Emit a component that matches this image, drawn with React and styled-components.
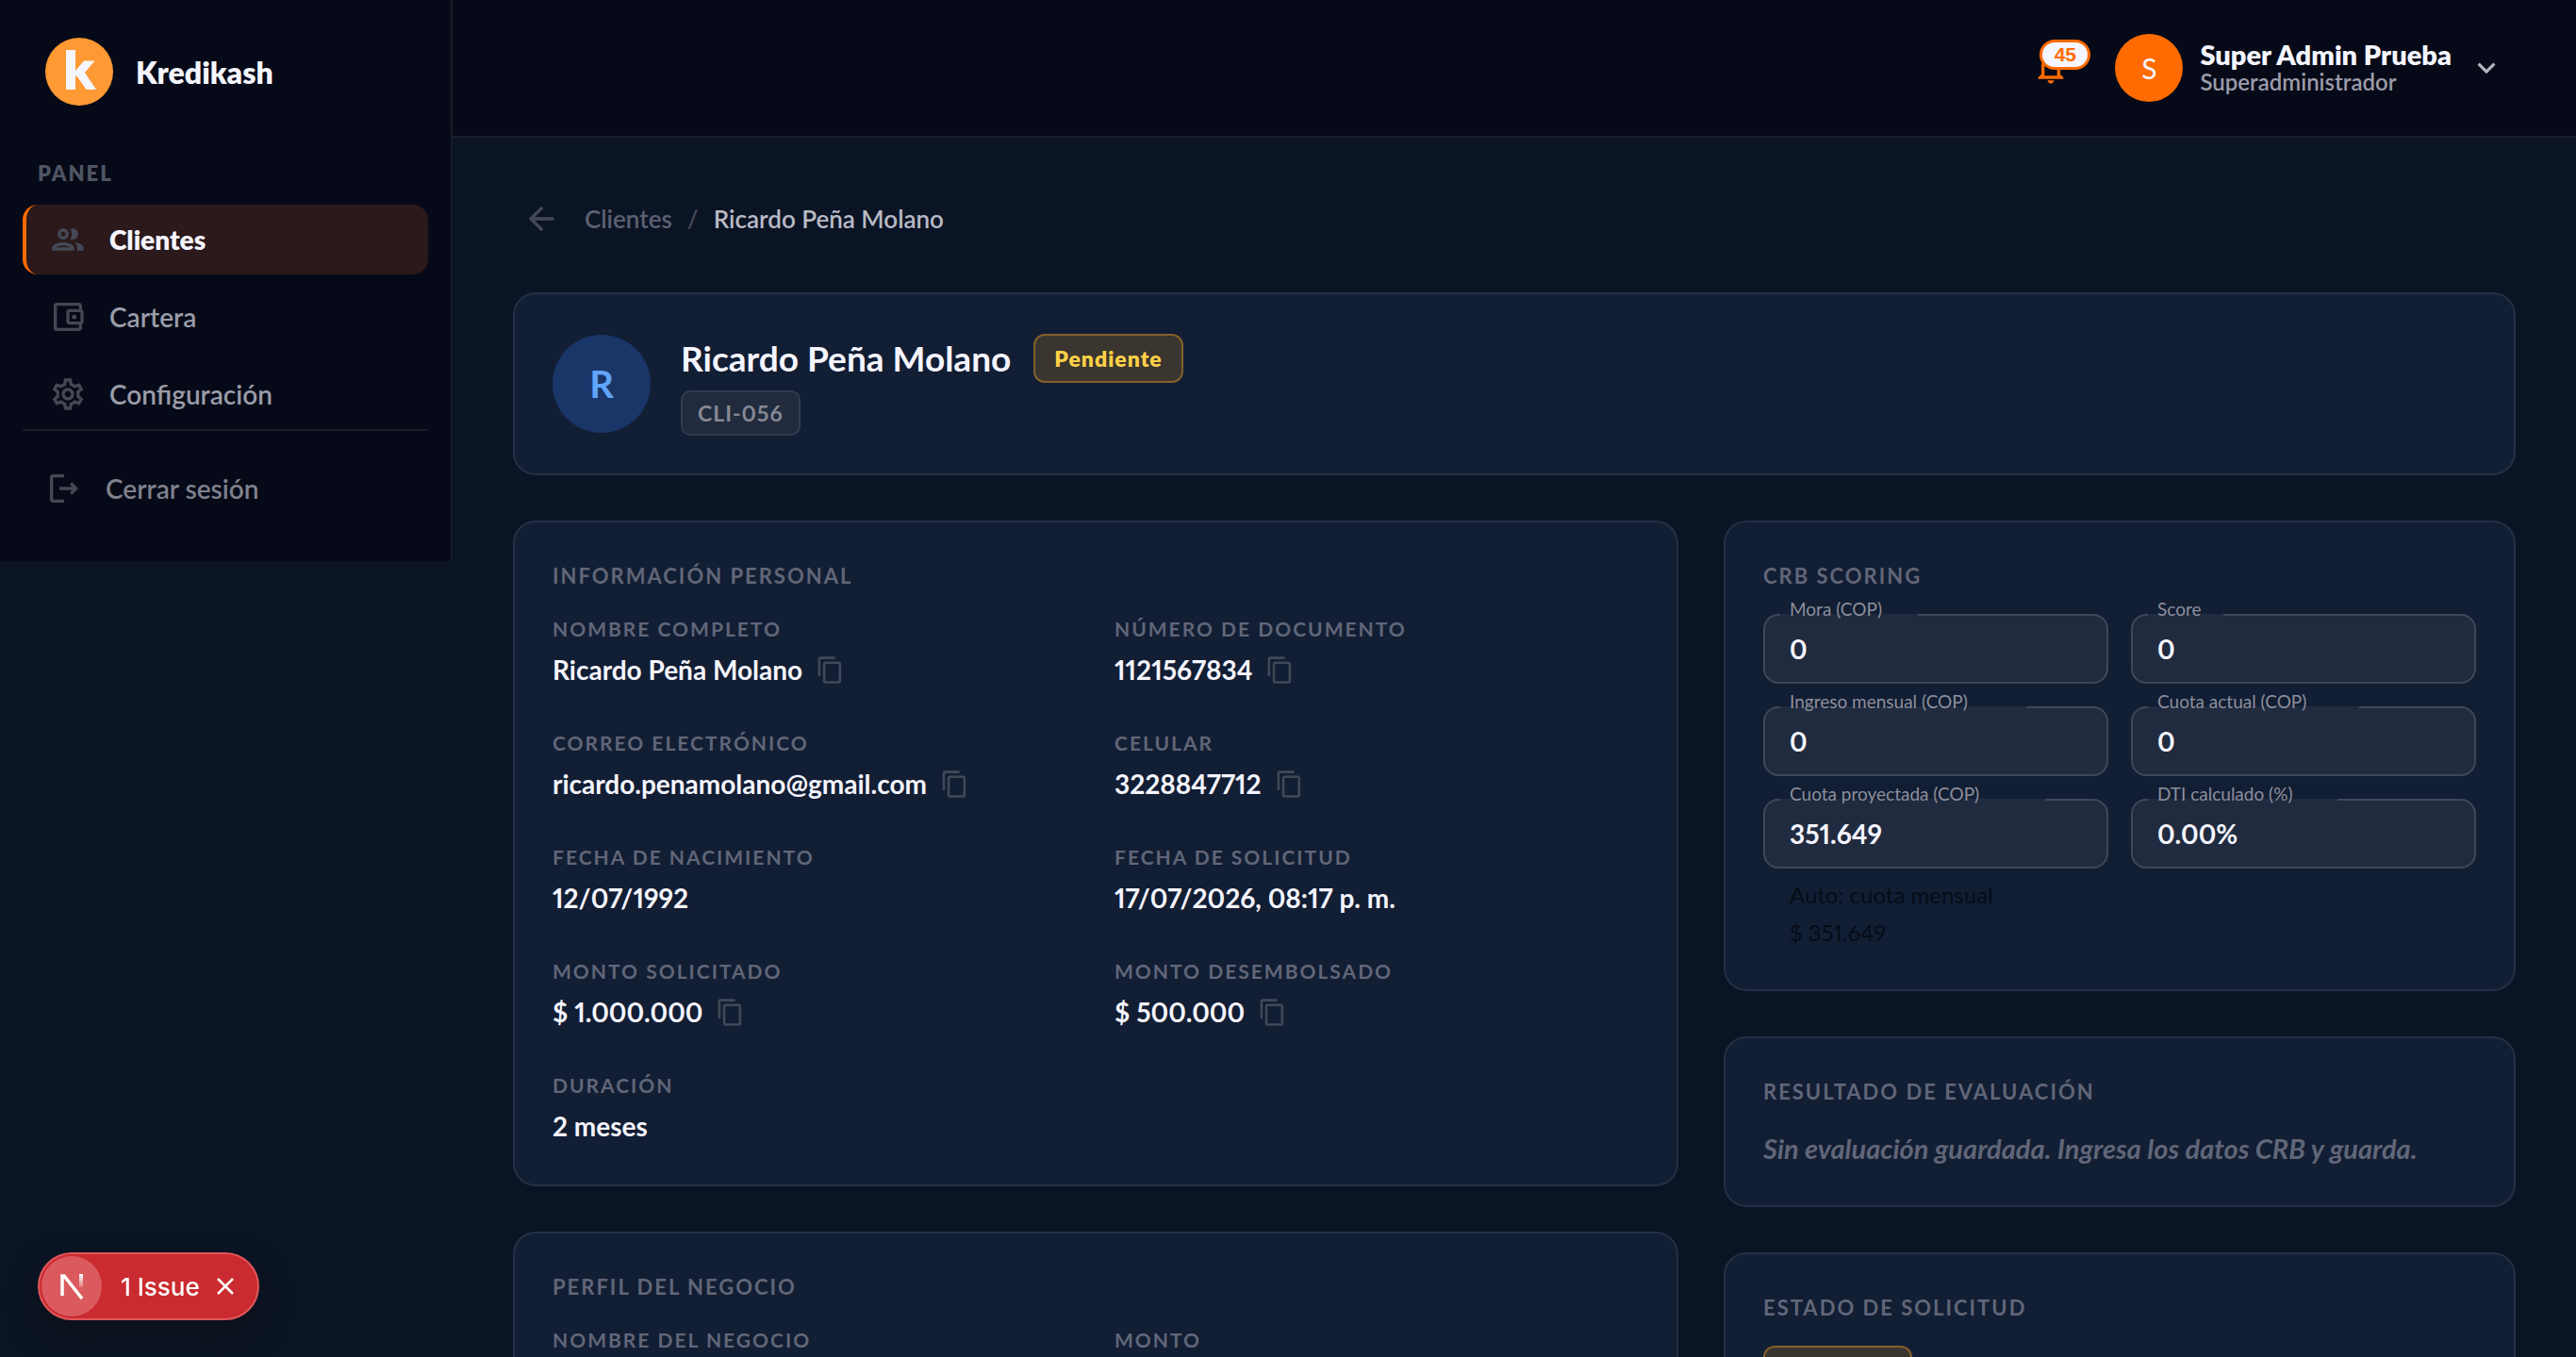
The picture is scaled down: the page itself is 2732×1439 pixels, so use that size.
import React from "react";
import styled, { createGlobalStyle } from "styled-components";
import {
  MdOutlineGroup,
  MdOutlineAccountBalanceWallet,
  MdOutlineSettings,
  MdContentCopy,
  MdArrowBack,
  MdKeyboardArrowDown,
  MdNotificationsNone,
} from "react-icons/md";

const navItems = [
  { id: "clientes", label: "Clientes", Icon: MdOutlineGroup, active: true },
  { id: "cartera", label: "Cartera", Icon: MdOutlineAccountBalanceWallet },
  { id: "configuracion", label: "Configuración", Icon: MdOutlineSettings },
];

const personalInfo = [
  { label: "Nombre completo", value: "Ricardo Peña Molano", copy: true },
  { label: "Número de documento", value: "1121567834", copy: true },
  {
    label: "Correo electrónico",
    value: "ricardo.penamolano@gmail.com",
    copy: true,
  },
  { label: "Celular", value: "3228847712", copy: true },
  { label: "Fecha de nacimiento", value: "12/07/1992" },
  { label: "Fecha de solicitud", value: "17/07/2026, 08:17 p. m." },
  { label: "Monto solicitado", value: "$ 1.000.000", copy: true },
  { label: "Monto desembolsado", value: "$ 500.000", copy: true },
  { label: "Duración", value: "2 meses" },
];

const businessInfo = [{ label: "Nombre del negocio" }, { label: "Monto" }];

// notch is the width of the opening in the outline behind the label
const scoringFields = [
  { id: "mora", label: "Mora (COP)", value: "0", notch: 146 },
  { id: "score", label: "Score", value: "0", notch: 80 },
  { id: "ingreso", label: "Ingreso mensual (COP)", value: "0", notch: 261 },
  { id: "cuota", label: "Cuota actual (COP)", value: "0", notch: 224 },
  {
    id: "proyectada",
    label: "Cuota proyectada (COP)",
    value: "351.649",
    notch: 281,
    help: ["Auto: cuota mensual", "$ 351.649"],
  },
  { id: "dti", label: "DTI calculado (%)", value: "0.00%", notch: 201 },
];

const LogoutIcon = () => (
  <svg viewBox="0 0 24 24" width="40" height="40" fill="currentColor">
    <path d="M17 8l-1.41 1.41L17.17 11H9v2h8.17l-1.58 1.58L17 16l4-4-4-4z" />
    <path d="M5 5h7V3H5c-1.1 0-2 .9-2 2v14c0 1.1.9 2 2 2h7v-2H5V5z" />
  </svg>
);

const BrandMark = () => (
  <svg viewBox="0 0 72 72" width="72" height="72">
    <circle cx="36" cy="36" r="36" fill="#ff9933" />
    <g fill="#f5f5ff">
      <rect x="22" y="13" width="10" height="42" />
      <polygon points="32,35 41,24.5 52.5,24.5 42,37 54,55 43.5,55 34.5,42 32,40" />
    </g>
  </svg>
);

const NextMark = () => (
  <svg viewBox="0 0 25 27" width="25" height="27" fill="none">
    <defs>
      <linearGradient id="nextFade" x1="0" y1="0" x2="0" y2="1">
        <stop offset="0" stopColor="#fff" />
        <stop offset="1" stopColor="#fff" stopOpacity="0.2" />
      </linearGradient>
    </defs>
    <path d="M2 23V2h2l19 24" stroke="#fff" strokeWidth="3.5" />
    <rect x="20" y="0" width="4" height="14" fill="url(#nextFade)" />
  </svg>
);

const Detail = ({ label, value, copy }) => (
  <div>
    <DetailLabel>{label}</DetailLabel>
    {value && (
      <DetailValue>
        {value}
        {copy && (
          <CopyButton type="button" aria-label={`Copiar ${label}`}>
            <MdContentCopy size={31} />
          </CopyButton>
        )}
      </DetailValue>
    )}
  </div>
);

const ScoringField = ({ id, label, value, notch, help }) => (
  <div>
    <FieldBox>
      <FieldLabel htmlFor={id}>{label}</FieldLabel>
      <FieldInput id={id} defaultValue={value} />
      <Outline aria-hidden="true">
        <legend style={{ width: notch }} />
      </Outline>
    </FieldBox>
    {help && (
      <HelpText>
        {help.map((line) => (
          <span key={line}>{line}</span>
        ))}
      </HelpText>
    )}
  </div>
);

const App = () => {
  return (
    <Shell>
      <GlobalStyle />
      <Sidebar>
        <Brand>
          <BrandMark />
          Kredikash
        </Brand>
        <NavTitle>Panel</NavTitle>
        <Nav>
          {navItems.map(({ id, label, Icon, active }) => (
            <NavLink key={id} href={`#${id}`} $active={active}>
              <Icon size={40} />
              {label}
            </NavLink>
          ))}
        </Nav>
        <LogoutArea>
          <LogoutButton type="button">
            <LogoutIcon />
            Cerrar sesión
          </LogoutButton>
        </LogoutArea>
      </Sidebar>

      <Page>
        <Topbar>
          <BellButton type="button" aria-label="Notificaciones">
            <MdNotificationsNone size={40} />
            <BellCount>45</BellCount>
          </BellButton>
          <UserButton type="button">
            <UserAvatar>S</UserAvatar>
            <UserText>
              <UserName>Super Admin Prueba</UserName>
              <UserRole>Superadministrador</UserRole>
            </UserText>
            <MdKeyboardArrowDown size={38} />
          </UserButton>
        </Topbar>

        <Main>
          <Breadcrumb aria-label="Ruta">
            <BackButton type="button" aria-label="Volver">
              <MdArrowBack size={40} />
            </BackButton>
            <a href="#clientes">Clientes</a>
            <Slash>/</Slash>
            <Current>Ricardo Peña Molano</Current>
          </Breadcrumb>

          <ClientCard>
            <ClientAvatar>R</ClientAvatar>
            <div>
              <ClientHeading>
                <ClientName>Ricardo Peña Molano</ClientName>
                <StatusBadge>Pendiente</StatusBadge>
              </ClientHeading>
              <ClientCode>CLI-056</ClientCode>
            </div>
          </ClientCard>

          <Columns>
            <Stack>
              <Card>
                <CardTitle>Información personal</CardTitle>
                <DetailGrid>
                  {personalInfo.map((item) => (
                    <Detail key={item.label} {...item} />
                  ))}
                </DetailGrid>
              </Card>
              <Card>
                <CardTitle>Perfil del negocio</CardTitle>
                <DetailGrid>
                  {businessInfo.map((item) => (
                    <Detail key={item.label} {...item} />
                  ))}
                </DetailGrid>
              </Card>
            </Stack>

            <Stack>
              <Card>
                <CardTitle>CRB Scoring</CardTitle>
                <FieldGrid>
                  {scoringFields.map((field) => (
                    <ScoringField key={field.id} {...field} />
                  ))}
                </FieldGrid>
              </Card>
              <Card>
                <CardTitle>Resultado de evaluación</CardTitle>
                <EmptyText>
                  Sin evaluación guardada. Ingresa los datos CRB y guarda.
                </EmptyText>
              </Card>
              <Card>
                <CardTitle>Estado de solicitud</CardTitle>
                <StatusBadge>Pendiente</StatusBadge>
              </Card>
            </Stack>
          </Columns>
        </Main>
      </Page>

      <IssueToast>
        <NextCircle>
          <NextMark />
        </NextCircle>
        <IssueButton type="button">1 Issue</IssueButton>
        <CloseButton type="button" aria-label="Cerrar">
          <svg viewBox="0 0 18 18" width="18" height="18">
            <path d="M1 1l16 16M17 1L1 17" stroke="#fff" strokeWidth="2.5" />
          </svg>
        </CloseButton>
      </IssueToast>
    </Shell>
  );
};

const GlobalStyle = createGlobalStyle`
  *, *::before, *::after {
    box-sizing: border-box;
  }
  body {
    margin: 0;
    background: #0b1424;
    color: #f5f5ff;
    font-family: Lato, "Liberation Sans", sans-serif;
    font-size: 28px;
    font-variant-numeric: proportional-nums;
  }
  button, input {
    font: inherit;
    color: inherit;
  }
  button {
    padding: 0;
    border: none;
    background: transparent;
    cursor: pointer;
  }
  a {
    color: inherit;
    text-decoration: none;
  }
  h1, h2, p {
    margin: 0;
  }
  svg {
    display: block;
    flex-shrink: 0;
  }
`;

const Shell = styled.div`
  display: flex;
  align-items: flex-start;
  height: 100vh;
  overflow: hidden;
`;

const Sidebar = styled.aside`
  flex: 0 0 480px;
  padding: 40px 24px;
  background: #060a18;
  border-right: 2px solid #191d29;
`;

const Brand = styled.div`
  display: flex;
  align-items: center;
  gap: 24px;
  padding-left: 24px;
  font-size: 32px;
  font-weight: 800;
`;

const NavTitle = styled.h2`
  margin-top: 56px;
  padding: 0 16px;
  color: #4f5563;
  font-size: 22px;
  font-weight: 800;
  line-height: 32px;
  letter-spacing: 2px;
  text-transform: uppercase;
`;

const Nav = styled.nav`
  display: flex;
  flex-direction: column;
  gap: 8px;
  margin-top: 17px;
`;

const NavLink = styled.a`
  display: flex;
  align-items: center;
  gap: 24px;
  height: 74px;
  padding-left: 24px;
  border-left: 4px solid ${(props) => (props.$active ? "#ff6b00" : "transparent")};
  border-radius: 16px;
  background: ${(props) => (props.$active ? "#2b191b" : "transparent")};
  color: ${(props) => (props.$active ? "#f5f5ff" : "#9b9ca9")};
  font-size: 28px;
  font-weight: ${(props) => (props.$active ? 800 : 600)};

  svg {
    color: #444854;
  }
`;

const LogoutArea = styled.div`
  padding-top: 24px;
  border-top: 2px solid #191d29;
`;

const LogoutButton = styled.button`
  display: flex;
  align-items: center;
  gap: 24px;
  height: 74px;
  padding-left: 24px;
  color: #7f818d;
  font-size: 28px;
  font-weight: 600;

  svg {
    color: #444854;
  }
`;

const Page = styled.div`
  flex: 1;
  min-width: 0;
`;

const Topbar = styled.header`
  display: flex;
  align-items: center;
  justify-content: flex-end;
  gap: 48px;
  height: 146px;
  padding-right: 76px;
  background: #060a18;
  border-bottom: 2px solid #191d29;
`;

const BellButton = styled.button`
  position: relative;
  color: #ff6b00;
`;

const BellCount = styled.span`
  position: absolute;
  top: -10px;
  left: 8px;
  width: 54px;
  height: 32px;
  border: 3px solid #ff6b00;
  border-radius: 16px;
  background: #f5f5ff;
  font-family: "Liberation Sans", sans-serif;
  font-size: 21px;
  font-weight: 700;
  line-height: 26px;
  text-align: center;
`;

const UserButton = styled.button`
  display: flex;
  align-items: center;
  gap: 18px;
  color: #b4b5c0;
  text-align: left;
`;

const UserAvatar = styled.span`
  display: grid;
  place-items: center;
  width: 72px;
  height: 72px;
  border-radius: 50%;
  background: #ff6b00;
  color: #f5f5ff;
  font-size: 30px;
`;

const UserText = styled.span`
  display: flex;
  flex-direction: column;
`;

const UserName = styled.span`
  color: #f5f5ff;
  font-size: 29px;
  font-weight: 800;
  line-height: 30px;
`;

const UserRole = styled.span`
  color: #9b9ca9;
  font-size: 24px;
  font-weight: 600;
  line-height: 28px;
`;

const Main = styled.main`
  padding: 56px 64px;
`;

const Breadcrumb = styled.nav`
  display: flex;
  align-items: center;
  gap: 16px;
  color: #5c6073;
  font-size: 26px;
  font-weight: 600;
`;

const BackButton = styled.button`
  padding: 10px;
  color: #444958;
`;

const Slash = styled.span`
  color: #444958;
`;

const Current = styled.span`
  color: #b9bac6;
`;

const Card = styled.section`
  padding: 40px;
  border: 2px solid #243044;
  border-radius: 24px;
  background: #121e34;
`;

const ClientCard = styled(Card)`
  display: flex;
  align-items: center;
  gap: 32px;
  margin: 48px 0;
`;

const ClientAvatar = styled.div`
  display: grid;
  place-items: center;
  width: 104px;
  height: 104px;
  border-radius: 50%;
  background: #1a3567;
  color: #60a5fa;
  font-size: 40px;
  font-weight: 700;
`;

const ClientHeading = styled.div`
  display: flex;
  align-items: center;
  gap: 24px;
  padding-top: 2px;
`;

const ClientName = styled.h1`
  font-size: 37px;
  font-weight: 700;
  line-height: 52px;
`;

const StatusBadge = styled.span`
  display: inline-flex;
  align-items: center;
  height: 52px;
  padding: 0 20px;
  border: 2px solid #83602a;
  border-radius: 12px;
  background: #3a362f;
  color: #ffd147;
  font-size: 23px;
  font-weight: 800;
  line-height: 23px;
  letter-spacing: 1px;
  vertical-align: top;
`;

const ClientCode = styled.div`
  width: fit-content;
  margin-top: 8px;
  padding: 0 16px;
  border: 2px solid #333c4d;
  border-radius: 10px;
  background: #212b3d;
  color: #858894;
  font-size: 23px;
  font-weight: 700;
  line-height: 44px;
  letter-spacing: 1px;
`;

const Columns = styled.div`
  display: grid;
  grid-template-columns: 103fr 70fr;
  align-items: start;
  gap: 48px;
`;

const Stack = styled.div`
  display: flex;
  flex-direction: column;
  gap: 48px;
  min-width: 0;
`;

const CardTitle = styled.h2`
  margin-bottom: 24px;
  color: #616678;
  font-size: 22px;
  font-weight: 700;
  line-height: 33px;
  letter-spacing: 2px;
  text-transform: uppercase;
`;

const DetailGrid = styled.div`
  display: grid;
  grid-template-columns: 1fr 1fr;
  gap: 40px;
`;

const DetailLabel = styled.div`
  color: #616678;
  font-size: 21px;
  font-weight: 700;
  line-height: 32px;
  letter-spacing: 2px;
  text-transform: uppercase;
`;

const DetailValue = styled.div`
  display: flex;
  align-items: center;
  gap: 14px;
  margin-top: 5px;
  font-weight: 700;
  line-height: 44px;
`;

const CopyButton = styled.button`
  color: #414858;
`;

const FieldGrid = styled.div`
  display: grid;
  grid-template-columns: 1fr 1fr;
  gap: 24px;
`;

const FieldBox = styled.div`
  position: relative;
  height: 74px;
  border-radius: 16px;
  background: #212b3f;
`;

const FieldLabel = styled.label`
  position: absolute;
  top: -17px;
  left: 28px;
  color: #8d8f9b;
  font-size: 19px;
  line-height: 24px;
`;

const FieldInput = styled.input`
  width: 100%;
  height: 100%;
  padding: 0 28px;
  border: none;
  outline: none;
  background: transparent;
  font-weight: 700;
`;

const Outline = styled.fieldset`
  position: absolute;
  inset: 0;
  margin: 0;
  padding: 0 16px;
  border: 2px solid #404757;
  border-radius: 16px;
  pointer-events: none;

  legend {
    height: 2px;
    padding: 0;
  }
`;

const HelpText = styled.p`
  display: flex;
  flex-direction: column;
  margin: 8px 28px 0;
  color: #060c18;
  font-size: 24px;
  line-height: 40px;
`;

const EmptyText = styled.p`
  color: #616678;
  font-size: 29px;
  font-style: italic;
  font-weight: 700;
  line-height: 40px;
`;

const IssueToast = styled.div`
  position: fixed;
  left: 40px;
  bottom: 39px;
  display: flex;
  align-items: center;
  height: 72px;
  padding: 0 25px 0 2px;
  border: 2px solid #e0575a;
  border-radius: 36px;
  background: #ca2b30;
  box-shadow: 0 16px 32px rgba(13, 17, 24, 0.8);
`;

const NextCircle = styled.span`
  display: grid;
  place-items: center;
  width: 64px;
  height: 64px;
  border-radius: 50%;
  background: #db5a5d;
`;

const IssueButton = styled.button`
  margin: 0 18px 0 20px;
  color: #fff;
  font-family: Inter, sans-serif;
  font-size: 26px;
  font-weight: 500;
`;

const CloseButton = styled.button``;

export default App;
